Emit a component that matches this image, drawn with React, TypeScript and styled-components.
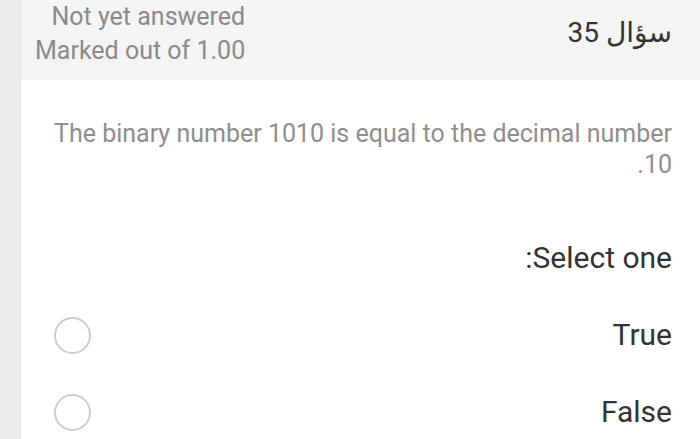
import React from 'react';
import styled, {createGlobalStyle} from 'styled-components';

const GlobalStyle = createGlobalStyle`
  html, body {
    margin: 0;
    padding: 0;
    background: #ffffff;
  }
  body {
    font-family: Roboto, "Liberation Sans", "DejaVu Sans", sans-serif;
    overflow: hidden;
  }
`;

type Choice = {
  label: string;
}

const choices: Choice[] = [
  {label: 'True'},
  {label: 'False'},
];

export default function App() {
  return (
    <>
      <GlobalStyle/>
      <Page>
        <SideStrip/>
        <Main>
          <Header>
            <QuestionNo>سؤال 35</QuestionNo>
            <Status>
              <StatusLine>Not yet answered</StatusLine>
              <StatusLine>Marked out of 1.00</StatusLine>
            </Status>
          </Header>

          <Body>
            <QuestionText>
              The binary number 1010 is equal to the decimal number 10.
            </QuestionText>
            <Prompt>Select one:</Prompt>
            <Choices>
              {choices.map(c => (
                <ChoiceRow key={c.label}>
                  <ChoiceLabel>{c.label}</ChoiceLabel>
                  <Radio/>
                </ChoiceRow>
              ))}
            </Choices>
          </Body>
        </Main>
      </Page>
    </>
  );
}

const Page = styled.div`
  display: flex;
  flex-direction: row;
  width: 700px;
  height: 439px;
  overflow: hidden;
`;

const SideStrip = styled.div`
  width: 20px;
  flex-shrink: 0;
  background: #ebebeb;
  border-right: 1px solid #e3e3e3;
`;

const Main = styled.div`
  flex: 1;
  display: flex;
  flex-direction: column;
  direction: rtl;
`;

const Header = styled.div`
  height: 80px;
  background: #f4f4f4;
  display: flex;
  flex-direction: row;
  align-items: flex-start;
  justify-content: space-between;
  padding: 0 28px 0 14px;
  box-sizing: border-box;
`;

const QuestionNo = styled.div`
  font-size: 28px;
  line-height: 34px;
  color: #333333;
  margin-top: 16px;
`;

const Status = styled.div`
  display: flex;
  flex-direction: column;
  align-items: flex-end;
  direction: ltr;
`;

const StatusLine = styled.div`
  font-size: 25px;
  line-height: 34px;
  color: #8a8a8a;
`;

const Body = styled.div`
  padding: 38px 28px 0 28px;
  display: flex;
  flex-direction: column;
`;

const QuestionText = styled.div`
  font-size: 25px;
  line-height: 31px;
  color: #8e8e8e;
  text-align: right;
`;

const Prompt = styled.div`
  font-size: 30px;
  line-height: 36px;
  color: #333333;
  margin-top: 60px;
`;

const Choices = styled.div`
  display: flex;
  flex-direction: column;
  margin-top: 39px;
  gap: 37px;
`;

const ChoiceRow = styled.div`
  display: flex;
  flex-direction: row;
  align-items: center;
  justify-content: space-between;
  height: 40px;
`;

const ChoiceLabel = styled.div`
  font-size: 30px;
  line-height: 36px;
  color: #333333;
`;

const Radio = styled.div`
  width: 33px;
  height: 33px;
  border: 2px solid #cdcdcd;
  border-radius: 50%;
  margin-left: 5px;
`;
